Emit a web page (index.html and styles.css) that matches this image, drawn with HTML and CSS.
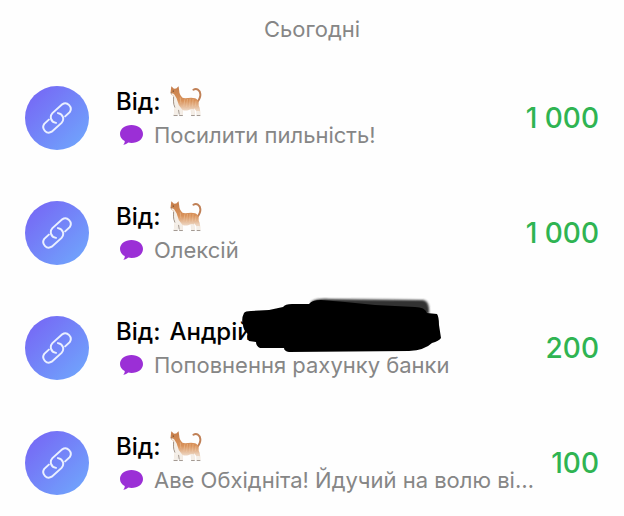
FILE: index.html
```html
<!DOCTYPE html>
<html lang="uk">
<head>
<meta charset="utf-8">
<meta name="viewport" content="width=device-width, initial-scale=1">
<title>Сьогодні</title>
<link rel="stylesheet" href="styles.css">
</head>
<body>
<svg class="defs" aria-hidden="true">
  <defs>
    <linearGradient id="coat" x1="0" y1="0" x2="0" y2="1">
      <stop offset="0" stop-color="#c47c4a"/>
      <stop offset=".5" stop-color="#d9925a"/>
      <stop offset=".8" stop-color="#ecd2bc"/>
      <stop offset="1" stop-color="#e9e0d8"/>
    </linearGradient>
    <filter id="soft" x="-5%" y="-10%" width="110%" height="120%"><feGaussianBlur stdDeviation="1"/></filter>
  </defs>
  <symbol id="link" viewBox="11 12 92 98">
    <g fill="none" stroke="#eaf0ff" stroke-width="6" stroke-linecap="round">
      <path d="M82 56L96 43A17 17 0 0 0 73 19L43 46C34 56 37 73 54 76"/>
      <path d="M32 66L18 79A17 17 0 0 0 41 103L71 76C80 66 77 49 60 46"/>
    </g>
  </symbol>
  <symbol id="bubble" viewBox="0 0 23 20">
    <path fill="#9b2fd6" d="M11.500 0C18 0 23 3.800 23 9S18 18 11.500 18C10.400 18 9.300 17.900 8.300 17.600C7 18.900 5 19.900 3.300 19.800C4.500 18.600 4.900 17.200 4.700 16.100C1.800 14.500 0 12 0 9C0 3.800 5 0 11.500 0Z"/>
  </symbol>
  <symbol id="cat" viewBox="0 0 100 96">
    <path fill="none" stroke="#c08056" stroke-width="6" stroke-linecap="round" d="M86 51C92 43 96 37 95 27C94 14 83 8 74 14"/>
    <path fill="url(#coat)" d="M7 3L15 11L22 10L29 3L31 17C31 24 34 31 41 38C51 42 65 35 79 40C89 44 91 51 90 62C94 70 95 79 95 91L84 92L84 80L76 70L78 91L67 92L66 73C56 78 47 77 41 75L42 91L31 92L28 74L26 91L14 92L18 67C11 53 15 41 14 32C8 31 4 27 5 20Z"/>
    <path fill="#f4eee7" d="M7 24L15 27L23 40L30 61L41 75L42 91L31 92L28 74L26 91L14 92L18 67C11 53 15 41 14 32C9 31 6 28 7 24ZM67 72L75 73L78 91L67 92ZM84 78L93 78L95 91L84 92Z"/>
    <path fill="none" stroke="#f3cda7" stroke-width="2" opacity=".65" d="M48 43L45 64M56 42L53 66M64 41L62 67M73 42L71 65M82 47L80 63M34 37L36 55"/>
    <circle cx="13" cy="18" r="2" fill="#54412f"/>
    <path fill="none" stroke="#776b61" stroke-width="2" d="M14 92H26M31 92H42M67 92H78M84 92H95M5 23L9 24M29 75L31 89M14 35C14 45 12 55 18 68"/>
  </symbol>
</svg>
<main class="history">
  <h1 class="day">Сьогодні</h1>
  <ul class="list">
    <li class="row">
      <span class="avatar"><svg class="link"><use href="#link"/></svg></span>
      <div class="details">
        <p class="sender"><span>Від:</span> <svg class="cat" role="img" aria-label="Кіт"><use href="#cat"/></svg></p>
        <p class="message"><svg class="bubble"><use href="#bubble"/></svg><span class="comment">Посилити пильність!</span></p>
      </div>
      <span class="amount">1 000</span>
    </li>
    <li class="row">
      <span class="avatar"><svg class="link"><use href="#link"/></svg></span>
      <div class="details">
        <p class="sender"><span>Від:</span> <svg class="cat" role="img" aria-label="Кіт"><use href="#cat"/></svg></p>
        <p class="message"><svg class="bubble"><use href="#bubble"/></svg><span class="comment">Олексій</span></p>
      </div>
      <span class="amount">1 000</span>
    </li>
    <li class="row">
      <span class="avatar"><svg class="link"><use href="#link"/></svg></span>
      <div class="details">
        <p class="sender"><span>Від:</span> <span>Андрій</span></p>
        <p class="message"><svg class="bubble"><use href="#bubble"/></svg><span class="comment">Поповнення рахунку банки</span></p>
        <svg class="redaction" viewBox="0 0 215 70" aria-hidden="true">
          <path filter="url(#soft)" fill="#333" d="M76 12Q82 8 95 9L188 10Q195 11 194 24L180 26L76 20Z"/>
          <path d="M9 23Q10 21 16 21L34 20L48 17Q50 14 57 14L74 14Q77 10 86 10L110 12L140 15L180 17Q190 17 192 23L202 24Q204 27 204 35L206 48Q204 51 197 53Q190 60 174 61L54 62Q49 61 49 58L25 58Q21 56 21 52L14 51Q11 48 13 44Q8 40 8 35Q6 29 9 23Z"/>
        </svg>
      </div>
      <span class="amount">200</span>
    </li>
    <li class="row">
      <span class="avatar"><svg class="link"><use href="#link"/></svg></span>
      <div class="details">
        <p class="sender"><span>Від:</span> <svg class="cat" role="img" aria-label="Кіт"><use href="#cat"/></svg></p>
        <p class="message"><svg class="bubble"><use href="#bubble"/></svg><span class="comment">Аве Обхідніта! Йдучий на волю ві…</span></p>
      </div>
      <span class="amount">100</span>
    </li>
  </ul>
</main>
</body>
</html>
```

FILE: styles.css
```css
* {
  box-sizing: border-box;
}

body {
  margin: 0;
  background: #fefefe;
  color: #000;
  font-family: Inter, "Liberation Sans", sans-serif;
}

.defs {
  position: absolute;
  width: 0;
  height: 0;
}

.history {
  padding: 14px 25px 20px;
}

.day {
  margin: 0;
  color: #868686;
  font-size: 22px;
  font-weight: 400;
  line-height: 30px;
  text-align: center;
}

.list {
  display: grid;
  gap: 51px;
  margin: 42px 0 0;
  padding: 0;
  list-style: none;
}

.row {
  display: grid;
  grid-template-columns: 64px minmax(0, 1fr) auto;
  column-gap: 27px;
  align-items: center;
}

.avatar {
  display: grid;
  place-items: center;
  height: 64px;
  border-radius: 50%;
  background: linear-gradient(135deg, #7669f5 10%, #70a3fc 90%);
}

.link {
  width: 30px;
  height: 32px;
}

.details {
  position: relative;
}

.sender,
.message {
  display: flex;
  align-items: center;
  margin: 0;
  white-space: nowrap;
}

.sender {
  gap: 9px;
  height: 30px;
  font-size: 24px;
  font-weight: 500;
}

.message {
  gap: 11px;
  height: 34px;
  padding-top: 4px;
  padding-left: 4px;
  color: #868686;
  font-size: 22px;
}

.cat {
  width: 33px;
  height: 32px;
}

.bubble {
  flex: none;
  width: 23px;
  height: 20px;
}

.amount {
  color: #2fb452;
  font-size: 28px;
  font-weight: 500;
}

.redaction {
  position: absolute;
  top: -26px;
  left: 119px;
  width: 215px;
  height: 70px;
}
```
